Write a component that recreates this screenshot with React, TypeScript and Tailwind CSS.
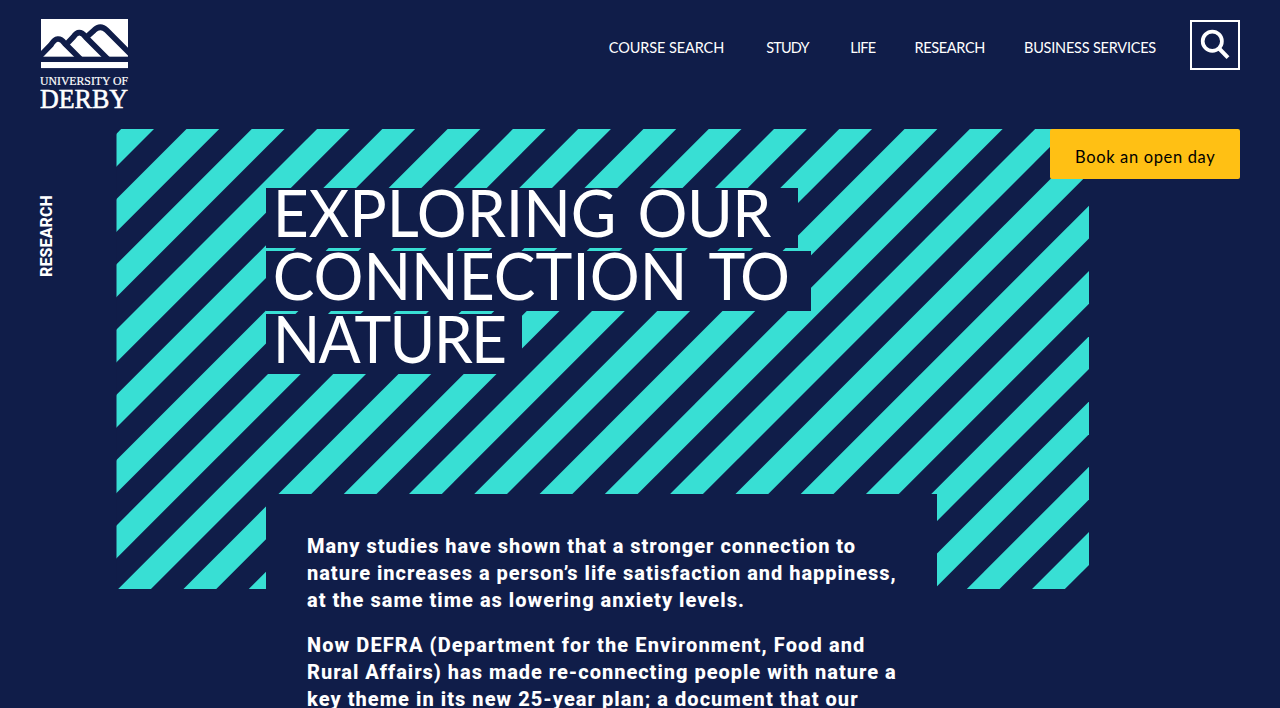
const navItems = [
  { label: "COURSE SEARCH", cls: "tracking-[-0.1px] mr-[42px]" },
  { label: "STUDY", cls: "tracking-[-0.8px] mr-[41.5px]" },
  { label: "LIFE", cls: "tracking-[-0.7px] mr-[39px]" },
  { label: "RESEARCH", cls: "tracking-[-0.35px] mr-[39px]" },
  { label: "BUSINESS SERVICES", cls: "tracking-[-0.22px] mr-[34px]" },
];

const titleLines = [
  { width: "w-[532px]", words: [{ t: "EXPLORING", cls: "tracking-normal" }, { t: "OUR", cls: "tracking-[-0.6px]" }] },
  { width: "w-[545px]", words: [{ t: "CONNECTION", cls: "tracking-normal" }, { t: "TO", cls: "tracking-[-3.5px]" }] },
  { width: "w-[256px]", words: [{ t: "NATURE", cls: "tracking-[-1.9px]" }] },
];

const intro = [
  [
    { t: "Many studies have shown that a stronger connection to", cls: "tracking-[0.97px]" },
    { t: "nature increases a person’s life satisfaction and happiness,", cls: "tracking-[0.98px]" },
    { t: "at the same time as lowering anxiety levels.", cls: "tracking-[1.01px]" },
  ],
  [
    { t: "Now DEFRA (Department for the Environment, Food and", cls: "tracking-[1.11px]" },
    { t: "Rural Affairs) has made re-connecting people with nature a", cls: "tracking-[0.98px]" },
    { t: "key theme in its new 25-year plan; a document that our", cls: "tracking-[1.04px]" },
  ],
];

const STRIPE_STEP = 65.28;
const STRIPE_WIDTH = 32.8;
const HERO_HEIGHT = 460;

function Logo() {
  return (
    <a href="#" aria-label="University of Derby" className="block">
      <svg width="90" height="100" viewBox="0 0 90 100" className="block">
        <g transform="translate(1 0) scale(0.3334)">
          <rect width="261" height="148" fill="#fff" />
          <g fill="none" stroke="#101d49" strokeWidth="17">
            <path d="M-8 116 L30 77 Q50 45 71 73 L118 120" />
            <path d="M73 79 L97 54 Q114 28 134 54 L202 122" />
            <path d="M138 53 L159 34 Q178 15 197 34 L272 109" />
          </g>
          <rect x="-4" y="113" width="270" height="16" fill="#101d49" />
          <path d="M-4 148H266V156H-4ZM-12 -4H0V156H-12ZM261 -4H275V156H261Z" fill="#101d49" />
        </g>
        <g fill="#fff" stroke="#fff" fontFamily="'Liberation Serif', serif">
          <text x="0" y="65.7" fontSize="11.6" strokeWidth="0.2" textLength="88" lengthAdjust="spacingAndGlyphs">UNIVERSITY OF</text>
          <text x="0" y="88.6" fontSize="28" strokeWidth="0.6" textLength="88" lengthAdjust="spacingAndGlyphs">DERBY</text>
        </g>
      </svg>
    </a>
  );
}

function Stripes() {
  return (
    <svg width="973" height={HERO_HEIGHT} className="absolute inset-0" aria-hidden="true">
      {Array.from({ length: 22 }, (_, i) => {
        const x = 5.2 + i * STRIPE_STEP;
        return (
          <polygon
            key={i}
            fill="#38dfd4"
            points={`${x},0 ${x + STRIPE_WIDTH},0 ${x + STRIPE_WIDTH - HERO_HEIGHT},${HERO_HEIGHT} ${x - HERO_HEIGHT},${HERO_HEIGHT}`}
          />
        );
      })}
      <rect width="0.5" height={HERO_HEIGHT} fill="#101d49" />
    </svg>
  );
}

function Header() {
  return (
    <header className="flex h-[129px] items-start justify-between pl-10 pr-10">
      <div className="pt-[19px]">
        <Logo />
      </div>
      <div className="flex items-start pt-5">
        <nav className="flex pt-[18px] font-[Lato,sans-serif] text-[14.5px] leading-5">
          {navItems.map((n) => (
            <a key={n.label} href="#" className={n.cls}>{n.label}</a>
          ))}
        </nav>
        <button aria-label="Search" className="h-[50px] w-[50px] border-2 border-white">
          <svg width="46" height="46" viewBox="0 0 46 46" fill="none" stroke="#fff">
            <circle cx="20.3" cy="19.2" r="9.6" strokeWidth="3.7" />
            <path d="M26.6 26 L36 35.6" strokeWidth="4" />
          </svg>
        </button>
      </div>
    </header>
  );
}

export default function App() {
  return (
    <div className="relative h-[708px] w-[1280px] overflow-hidden bg-[#101d49] text-white">
      <Header />

      {/* Sticky call to action */}
      <a
        href="#"
        className="absolute top-[129px] right-10 z-10 h-[50px] w-[190px] rounded-[2px] bg-[#ffc014] pt-[18px] pl-[25px] font-[Lato,sans-serif] text-[16.5px] leading-5 tracking-[0.65px] text-black"
      >
        Book an open day
      </a>

      <main className="flex">
        <aside className="w-[116px] shrink-0 pt-[66px] pl-[37px]">
          <div className="rotate-180 font-[Roboto,sans-serif] text-base leading-5 font-extrabold tracking-[0.1px] [writing-mode:vertical-rl]">
            RESEARCH
          </div>
        </aside>

        <section className="relative w-[973px] shrink-0">
          <Stripes />
          <div className="relative ml-[150px] pt-[59px]">
            <h1 className="flex h-[306px] flex-col gap-[3px] font-[Lato,sans-serif] text-[65px] leading-[48px]">
              {titleLines.map((line) => (
                <span key={line.width} className={`block h-[60px] bg-[#101d49] ${line.width}`}>
                  <span className="flex origin-left scale-x-96 gap-[22px] pl-[7px] whitespace-nowrap">
                    {line.words.map((w) => (
                      <span key={w.t} className={w.cls}>{w.t}</span>
                    ))}
                  </span>
                </span>
              ))}
            </h1>

            {/* Intro panel */}
            <div className="h-[260px] w-[671px] space-y-[18px] bg-[#101d49] pt-[39px] pl-[41px] font-[Roboto,sans-serif] text-xl leading-[27px] font-extrabold whitespace-nowrap">
              {intro.map((lines, i) => (
                <p key={i}>
                  {lines.map((l) => (
                    <span key={l.t} className={`block ${l.cls}`}>{l.t}</span>
                  ))}
                </p>
              ))}
            </div>
          </div>
        </section>
      </main>
    </div>
  );
}
